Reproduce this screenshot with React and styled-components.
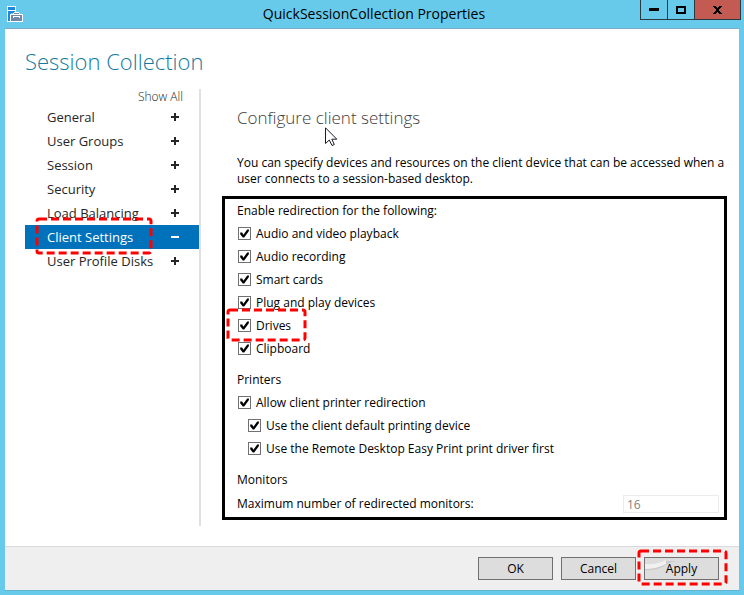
import React, { useState } from "react";
//style
import styled, { createGlobalStyle } from "styled-components";

const pages = [
  "General",
  "User Groups",
  "Session",
  "Security",
  "Load Balancing",
  "Client Settings",
  "User Profile Disks",
];

const devices = [
  "Audio and video playback",
  "Audio recording",
  "Smart cards",
  "Plug and play devices",
  "Drives",
  "Clipboard",
];

const Marker = () => (
  <svg aria-hidden="true">
    <rect x="0" y="0" width="100%" height="100%" rx="2" />
  </svg>
);

const CheckRow = ({ label, nested, marked }) => {
  const [checked, setChecked] = useState(true);

  return (
    <Row $nested={nested}>
      <Check>
        <input
          type="checkbox"
          checked={checked}
          onChange={() => setChecked(!checked)}
        />
        {checked && (
          <svg viewBox="0 0 13 13" aria-hidden="true">
            <path d="M2.2 5.6 L4.2 5.6 L5.4 7.7 L9.2 2.6 L11 2.6 L10.8 4.3 L6.2 10.6 L4.8 10.6 L2.2 7.2 Z" />
          </svg>
        )}
      </Check>
      {label}
      {marked && (
        <Mark $top={-6} $left={-12} $width={81} $height={34}>
          <Marker />
        </Mark>
      )}
    </Row>
  );
};

const ServerIcon = () => (
  <svg width="16" height="16" viewBox="0 0 16 16" aria-hidden="true">
    <path d="M0 0h9v7H4v9H0z" fill="#fff" />
    <path d="M1 1h7v3H1zM1 5h7v2H4v2H3v6H1z" fill="#1e88dc" />
    <path d="M3 8h3V7h1V6h5v1h1v1h3v8H3z" fill="#fff" />
    <path d="M4 9h11v2H4zM4 12h11v3H4z" fill="#7189a8" />
    <path d="M7 8V7h5v1h-1H8z" fill="#7189a8" />
    <path d="M6 10h7v1H6z" fill="#fff" />
    <path d="M4 11h2v1H4zM7 11h5v1H7zM13 11h2v1h-2z" fill="#7189a8" />
  </svg>
);

const Cursor = () => (
  <svg width="13" height="20" viewBox="0 0 13 20" aria-hidden="true">
    <path
      d="M.5 .8V16.5L4.3 13L7 18.5L9.3 17.5L6.8 12.2H11.8Z"
      fill="#fff"
      stroke="#1a1a2a"
    />
  </svg>
);

const App = () => {
  const [page, setPage] = useState("Client Settings");

  return (
    <Window>
      <GlobalStyle />
      <TitleBar>
        <ServerIcon />
        <h1>QuickSessionCollection Properties</h1>
        <Controls>
          <ControlButton aria-label="Minimize">
            <svg width="10" height="3" viewBox="0 0 10 3">
              <path d="M0 0h10v3H0z" />
            </svg>
          </ControlButton>
          <ControlButton aria-label="Maximize">
            <svg width="10" height="8" viewBox="0 0 10 8">
              <path d="M0 0h10v8H0zM2 2v4h6V2z" fillRule="evenodd" />
            </svg>
          </ControlButton>
          <ControlButton $close aria-label="Close">
            <svg width="9" height="8" viewBox="0 0 9 8">
              <path d="M0 0h3v1h1v1h1V1h1V0h3v1H8v1H7v1H6v2h1v1h1v1h1v1H6V7H5V6H4v1H3v1H0V7h1V6h1V5h1V3H2V2H1V1H0z" />
            </svg>
          </ControlButton>
        </Controls>
      </TitleBar>

      <Client>
        <Body>
          <h2>Session Collection</h2>
          <Columns>
            <Sidebar>
              <ShowAll href="#all">Show All</ShowAll>
              {pages.map((name) => (
                <NavItem
                  key={name}
                  $active={page === name}
                  onClick={() => setPage(name)}
                >
                  {name}
                  <svg width="8" height="8" viewBox="0 0 8 8">
                    <path
                      d={
                        page === name
                          ? "M0 3h8v2H0z"
                          : "M0 3h3V0h2v3h3v2H5v3H3V5H0z"
                      }
                    />
                  </svg>
                  {name === "Client Settings" && (
                    <Mark $top={-8} $left={10} $width={118} $height={38}>
                      <Marker />
                    </Mark>
                  )}
                </NavItem>
              ))}
            </Sidebar>

            <Content>
              <Heading>
                Configure client settings
                <Pointer>
                  <Cursor />
                </Pointer>
              </Heading>
              <Intro>
                You can specify devices and resources on the client device that
                can be accessed when a user connects to a session-based desktop.
              </Intro>
              <Settings>
                <Group>
                  <GroupTitle>Enable redirection for the following:</GroupTitle>
                  {devices.map((name) => (
                    <CheckRow
                      key={name}
                      label={name}
                      marked={name === "Drives"}
                    />
                  ))}
                </Group>
                <Group>
                  <GroupTitle>Printers</GroupTitle>
                  <CheckRow label="Allow client printer redirection" />
                  <CheckRow nested label="Use the client default printing device" />
                  <CheckRow
                    nested
                    label="Use the Remote Desktop Easy Print print driver first"
                  />
                </Group>
                <Group>
                  <GroupTitle>Monitors</GroupTitle>
                  <Field>
                    <label htmlFor="monitors">
                      Maximum number of redirected monitors:
                    </label>
                    <input id="monitors" type="text" defaultValue="16" disabled />
                  </Field>
                </Group>
              </Settings>
            </Content>
          </Columns>
        </Body>

        <Footer>
          <Button>OK</Button>
          <Button>Cancel</Button>
          <Button>
            <Smudge viewBox="0 0 34 12" aria-hidden="true">
              <path d="M0 9 Q14 9 20 2 L32 2 Q24 3 21 6 Q12 12 0 11Z" fill="#cacaca" />
              <path d="M0 5 Q12 6 21 1 V5 Q12 10 0 10Z" fill="#f1f1f1" />
            </Smudge>
            <span>Apply</span>
            <Mark $top={-9} $left={-8} $width={91} $height={37}>
              <Marker />
            </Mark>
          </Button>
        </Footer>
      </Client>
    </Window>
  );
};

const GlobalStyle = createGlobalStyle`
  * {
    box-sizing: border-box;
    margin: 0;
    padding: 0;
  }
  body {
    font-family: "Open Sans", "Noto Sans", sans-serif;
    font-size: 12px;
    line-height: 16px;
    color: #000;
  }
  button,
  input {
    font: inherit;
    color: inherit;
  }
`;

const Window = styled.div`
  min-height: 100vh;
  display: flex;
  flex-direction: column;
  background: #67caea;
`;

const TitleBar = styled.header`
  height: 28px;
  padding: 0 3px 0 7px;
  display: grid;
  grid-template-columns: 1fr auto 1fr;
  align-items: center;
  h1 {
    font-size: 14px;
    font-weight: 400;
    line-height: 20px;
  }
`;

const Controls = styled.div`
  display: flex;
  align-self: start;
  justify-content: flex-end;
`;

const ControlButton = styled.button`
  width: ${({ $close }) => ($close ? "47px" : "28px")};
  height: 20px;
  display: flex;
  justify-content: center;
  align-items: center;
  border: 1px solid #2b3a42;
  border-top: none;
  background: ${({ $close }) => ($close ? "#c35b52" : "transparent")};
  & + & {
    margin-left: -1px;
  }
`;

const Client = styled.div`
  flex: 1;
  margin: 0 5px 5px;
  display: flex;
  flex-direction: column;
  background: #fff;
  border-top: 1px solid #7fabcb;
  box-shadow: 0 1px 0 #62b4d0;
`;

const Body = styled.main`
  flex: 1;
  padding: 16px 12px 20px 20px;
  display: flex;
  flex-direction: column;
  h2 {
    margin-bottom: 12px;
    font-size: 22px;
    font-weight: 300;
    line-height: 32px;
    color: #127a9c;
  }
`;

const Columns = styled.div`
  flex: 1;
  display: flex;
  gap: 21px;
`;

const Sidebar = styled.nav`
  width: 176px;
  flex: none;
  display: flex;
  flex-direction: column;
  border-right: 2px solid #e0e0e0;
`;

const ShowAll = styled.a`
  align-self: flex-end;
  margin-right: 16px;
  font-weight: 300;
  color: #222;
  text-decoration: none;
`;

const NavItem = styled.button`
  position: relative;
  height: 24px;
  padding: 0 20px 0 22px;
  display: flex;
  justify-content: space-between;
  align-items: center;
  border: none;
  font-size: 13px;
  text-align: left;
  background: ${({ $active }) => ($active ? "#0072bc" : "transparent")};
  color: ${({ $active }) => ($active ? "#fff" : "#262626")};
  > svg {
    fill: currentColor;
  }
`;

// dashed red frame laid over a control
const Mark = styled.span`
  position: absolute;
  z-index: 1;
  top: ${({ $top }) => $top}px;
  left: ${({ $left }) => $left}px;
  width: ${({ $width }) => $width}px;
  height: ${({ $height }) => $height}px;
  padding: 2px;
  pointer-events: none;
  svg {
    display: block;
    width: 100%;
    height: 100%;
    overflow: visible;
  }
  rect {
    fill: none;
    stroke: #fe0000;
    stroke-width: 3px;
    stroke-dasharray: 8 4;
  }
`;

const Content = styled.section`
  flex: 1;
  padding-top: 15px;
`;

const Heading = styled.h3`
  position: relative;
  margin-bottom: 23px;
  padding-left: 15px;
  font-size: 17px;
  font-weight: 300;
  line-height: 28px;
  color: #3c3c3c;
`;

const Pointer = styled.span`
  position: absolute;
  top: 23px;
  left: 103px;
  svg {
    display: block;
  }
`;

const Intro = styled.p`
  margin-bottom: 9px;
  padding-left: 15px;
`;

const Settings = styled.form`
  padding: 4px 5px 4px 12px;
  display: flex;
  flex-direction: column;
  gap: 12px;
  border: 3px solid #000;
`;

const Group = styled.fieldset`
  border: none;
`;

const GroupTitle = styled.legend`
  margin-bottom: 3px;
`;

const Row = styled.label`
  position: relative;
  height: 23px;
  margin-left: ${({ $nested }) => ($nested ? "11px" : "1px")};
  display: flex;
  align-items: center;
  gap: 5px;
`;

const Check = styled.span`
  display: grid;
  input,
  svg {
    grid-area: 1 / 1;
    width: 13px;
    height: 13px;
  }
  input {
    appearance: none;
    border: 1px solid #707070;
    background: #fff;
  }
  svg {
    pointer-events: none;
  }
`;

const Field = styled.div`
  margin-top: 4px;
  display: flex;
  justify-content: space-between;
  align-items: center;
  input {
    width: 96px;
    height: 18px;
    padding: 0 3px;
    border: 1px solid #ececf0;
    background: #fff;
    color: #838383;
  }
`;

const Footer = styled.footer`
  padding: 10px 20px;
  display: flex;
  justify-content: flex-end;
  gap: 8px;
  border-top: 1px solid #d9d9d9;
  background: #efefef;
`;

const Button = styled.button`
  position: relative;
  width: 75px;
  height: 23px;
  border: 1px solid #707070;
  background: #dddddd;
  line-height: 16px;
  > span {
    position: relative;
  }
  > ${Mark} {
    position: absolute;
  }
`;

const Smudge = styled.svg`
  position: absolute;
  top: 1px;
  left: 0;
  width: 34px;
  height: 12px;
`;

export default App;
